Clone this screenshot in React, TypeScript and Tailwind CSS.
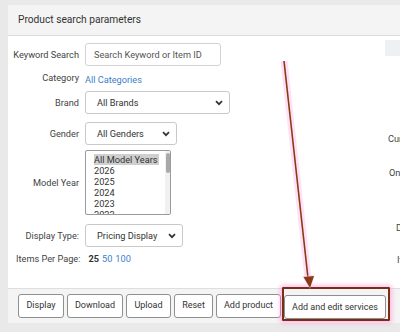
import { ReactNode } from 'react'

function Chevron() {
  return (
    <svg width="8" height="6" viewBox="0 0 8 6" className="shrink-0">
      <path d="M1 1.2l3 3 3-3" fill="none" stroke="#333" strokeWidth="1.7" />
    </svg>
  )
}

function Select({ label, width }: { label: string; width: string }) {
  return (
    <div
      className={`flex h-[23px] items-center justify-between whitespace-nowrap rounded-[3px] border border-[#c9c9c9] bg-white pl-[11px] pr-[6px] text-[9.2px] text-[#333] ${width}`}
    >
      <span>{label}</span>
      <Chevron />
    </div>
  )
}

function Row({ label, children, className = '' }: { label: string; children: ReactNode; className?: string }) {
  return (
    <div className={`flex items-center ${className}`}>
      <div className="w-[71px] shrink-0 whitespace-nowrap text-right text-[9.2px] text-[#444]">{label}</div>
      <div className="ml-[6px]">{children}</div>
    </div>
  )
}

function Btn({ children, width }: { children: ReactNode; width: string }) {
  return (
    <button
      className={`h-[24px] shrink-0 whitespace-nowrap rounded-[3px] border border-[#8f8f8f] bg-white text-[9px] text-[#333] ${width}`}
    >
      {children}
    </button>
  )
}

const years = ['2026', '2025', '2024', '2023', '2022']

export default function App() {
  return (
    <div
      className="relative h-[332px] w-[400px] overflow-hidden bg-[#e9e9e9] pl-[8px] pt-[5px]"
      style={{ fontFamily: 'Roboto, "Liberation Sans", sans-serif' }}
    >
      <div className="w-[430px] bg-white">
        <div className="flex h-[31px] items-center border-b border-[#dcdcdc] bg-[#f4f4f4] pl-[10px] text-[10.2px] text-[#333]">
          Product search parameters
        </div>

        <div className="flex h-[252px]">
          <div className="w-[377px] shrink-0 pt-[7px]">
            <Row label="Keyword Search">
              <div className="flex h-[23px] w-[136px] items-center whitespace-nowrap rounded-[3px] border border-[#d3d3d3] bg-white pl-[8px] text-[9.2px] text-[#555]">
                Search Keyword or Item ID
              </div>
            </Row>
            <Row label="Category" className="mt-[4px] h-[16px]">
              <span className="text-[9.2px] text-[#3b7fc9]">All Categories</span>
            </Row>
            <Row label="Brand" className="mt-[5px]">
              <Select label="All Brands" width="w-[145px]" />
            </Row>
            <Row label="Gender" className="mt-[8px]">
              <Select label="All Genders" width="w-[92px]" />
            </Row>
            <Row label="Model Year" className="mt-[5px]">
              <div className="relative h-[65px] w-[86px] overflow-hidden rounded-[2px] border border-[#9a9a9a] bg-white pl-[8px] pt-[3px] text-[9.2px] leading-[11px] text-[#333]">
                <div className="w-fit whitespace-nowrap bg-[#cfcfcf] pr-[1px]">All Model Years</div>
                {years.map((y) => (
                  <div key={y}>{y}</div>
                ))}
                <div className="absolute right-0 top-0 h-full w-[5px] bg-[#f1f1f1]">
                  <div className="mx-auto mt-[2px] h-[20px] w-[4px] rounded-full bg-[#a9a9a9]" />
                </div>
              </div>
            </Row>
            <Row label="Display Type:" className="mt-[9px]">
              <Select label="Pricing Display" width="w-[98px]" />
            </Row>
            <div className="mt-[5px] flex items-center whitespace-nowrap pl-[8px] text-[9.2px] text-[#444]">
              <span>Items Per Page:</span>
              <span className="ml-[8px] font-bold text-[#333]">25</span>
              <span className="ml-[3px] text-[#3b7fc9]">50</span>
              <span className="ml-[3px] text-[#3b7fc9]">100</span>
            </div>
          </div>

          <div className="whitespace-nowrap pt-[4px] text-[9.2px] text-[#444]">
            <div className="h-[16px] w-[40px] bg-[#eef0f1]" />
            <div className="mt-[76px] pl-[3px]">Current</div>
            <div className="mt-[20px] pl-[4px]">Online</div>
            <div className="mt-[41px] pl-[11px]">Display</div>
            <div className="mt-[19px] pl-[12px]">Items</div>
          </div>
        </div>

        <div className="flex h-[35px] items-center gap-[3px] border-t border-[#dedede] bg-[#f4f4f4] pl-[10px]">
          <Btn width="w-[46px]">Display</Btn>
          <Btn width="w-[56px]">Download</Btn>
          <Btn width="w-[45px]">Upload</Btn>
          <Btn width="w-[39px]">Reset</Btn>
          <Btn width="w-[65px]">Add product</Btn>
          <div className="relative shrink-0">
            <div className="absolute -left-[2px] -right-[4px] -top-[6px] -bottom-[2px] rounded-[1px] border-2 border-[#7b2d17] shadow-[0_0_4px_2px_rgba(255,150,220,0.6)]" />
            <Btn width="relative w-[102px]">Add and edit services</Btn>
          </div>
        </div>
      </div>

      <svg className="pointer-events-none absolute left-0 top-0" width="400" height="332">
        <line x1="284" y1="61" x2="308" y2="278" stroke="#ffc4ef" strokeWidth="7" strokeOpacity="0.5" />
        <line x1="284" y1="61" x2="308" y2="278" stroke="#8a3a12" strokeWidth="1.6" />
        <path d="M302 276 L315 275 L310 289 Z" fill="#ffc4ef" fillOpacity="0.5" />
        <path d="M303.5 277 L314 276 L310 288 Z" fill="#8a3a12" />
      </svg>
    </div>
  )
}
